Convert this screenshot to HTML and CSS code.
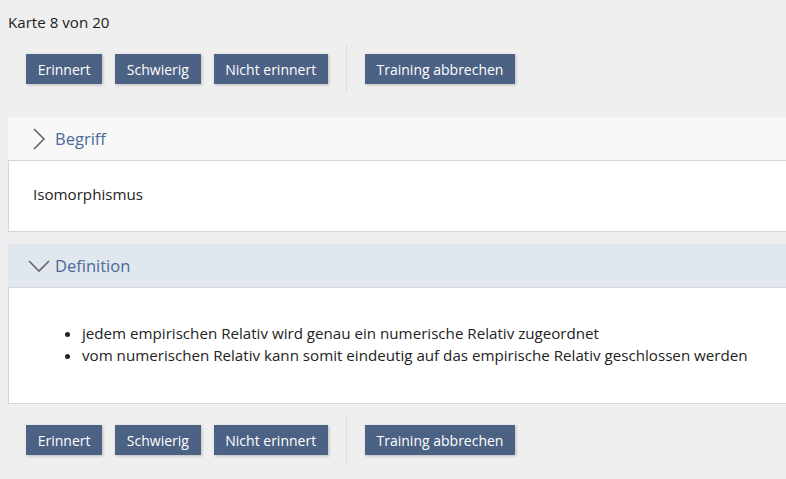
FILE: index.html
```html
<!DOCTYPE html>
<html lang="de">
<head>
<meta charset="utf-8">
<title>Karte 8 von 20</title>
<link rel="stylesheet" href="styles.css">
</head>
<body>
<div class="page">
  <div class="counter">Karte 8 von 20</div>
  <div class="toolbar">
    <div class="group">
      <button class="btn">Erinnert</button>
      <button class="btn">Schwierig</button>
      <button class="btn">Nicht erinnert</button>
    </div>
    <div class="sep"></div>
    <div class="group">
      <button class="btn">Training abbrechen</button>
    </div>
  </div>

  <section class="panel panel-first">
    <div class="panel-head">
      <svg class="chev" width="14" height="22" viewBox="0 0 14 22"><path d="M2 1 L12 11 L2 21" fill="none" stroke="#666" stroke-width="1.6"/></svg>
      <span class="panel-title">Begriff</span>
    </div>
    <div class="panel-body">
      <p class="term">Isomorphismus</p>
    </div>
  </section>

  <section class="panel panel-open">
    <div class="panel-head head-open">
      <svg class="chev chev-down" width="22" height="14" viewBox="0 0 22 14"><path d="M1 2 L11 12 L21 2" fill="none" stroke="#666" stroke-width="1.6"/></svg>
      <span class="panel-title">Definition</span>
    </div>
    <div class="panel-body body-def">
      <ul class="deflist">
        <li>jedem empirischen Relativ wird genau ein numerische Relativ zugeordnet</li>
        <li>vom numerischen Relativ kann somit eindeutig auf das empirische Relativ geschlossen werden</li>
      </ul>
    </div>
  </section>

  <div class="toolbar toolbar-bottom">
    <div class="group">
      <button class="btn">Erinnert</button>
      <button class="btn">Schwierig</button>
      <button class="btn">Nicht erinnert</button>
    </div>
    <div class="sep"></div>
    <div class="group">
      <button class="btn">Training abbrechen</button>
    </div>
  </div>
</div>
</body>
</html>
```

FILE: styles.css
```css
html, body {
  margin: 0;
  padding: 0;
  background: #efefef;
  overflow: hidden;
}
body {
  font-family: "Open Sans", "Noto Sans", sans-serif;
  font-size: 15.15px;
  color: #222;
}
.page {
  padding: 8px 0 0 8px;
}
.counter {
  line-height: 20px;
  padding-top: 4px;
}
.toolbar {
  display: flex;
  align-items: stretch;
  padding-left: 18px;
  margin-top: 13px;
  height: 47px;
}
.group {
  display: flex;
  gap: 13px;
  padding-top: 9px;
}
.sep {
  width: 1px;
  background: #dcdcdc;
  margin: 0 18px;
}
.btn {
  font-family: inherit;
  font-size: 14px;
  height: 30px;
  padding: 0 11.7px;
  border: none;
  background: #4b6284;
  color: #fff;
  box-shadow: 1px 1px 3px rgba(0,0,0,0.22);
  cursor: pointer;
}
.panel {
  width: 800px;
}
.panel-first {
  margin-top: 25px;
}
.panel-open {
  margin-top: 12px;
}
.panel-head {
  height: 43px;
  background: #f8f8f8;
  border-bottom: 1px solid #d6d6d6;
  display: flex;
  align-items: center;
  padding-left: 24px;
}
.head-open {
  background: #e0e7ef;
  padding-left: 20px;
}
.chev {
  display: block;
  margin-right: 9px;
}
.chev-down {
  margin-right: 5px;
}
.panel-title {
  font-size: 16.5px;
  color: #4c6a98;
}
.panel-body {
  background: #fff;
  border-left: 1px solid #d6d6d6;
  border-bottom: 1px solid #d6d6d6;
}
.term {
  margin: 0;
  padding: 22px 0 26px 24px;
  line-height: 22px;
}
.body-def {
  padding: 34px 0 37px 0;
}
.deflist {
  margin: 0;
  padding-left: 73px;
  line-height: 22px;
}
.toolbar-bottom {
  margin-top: 12px;
  height: 48px;
}
```
